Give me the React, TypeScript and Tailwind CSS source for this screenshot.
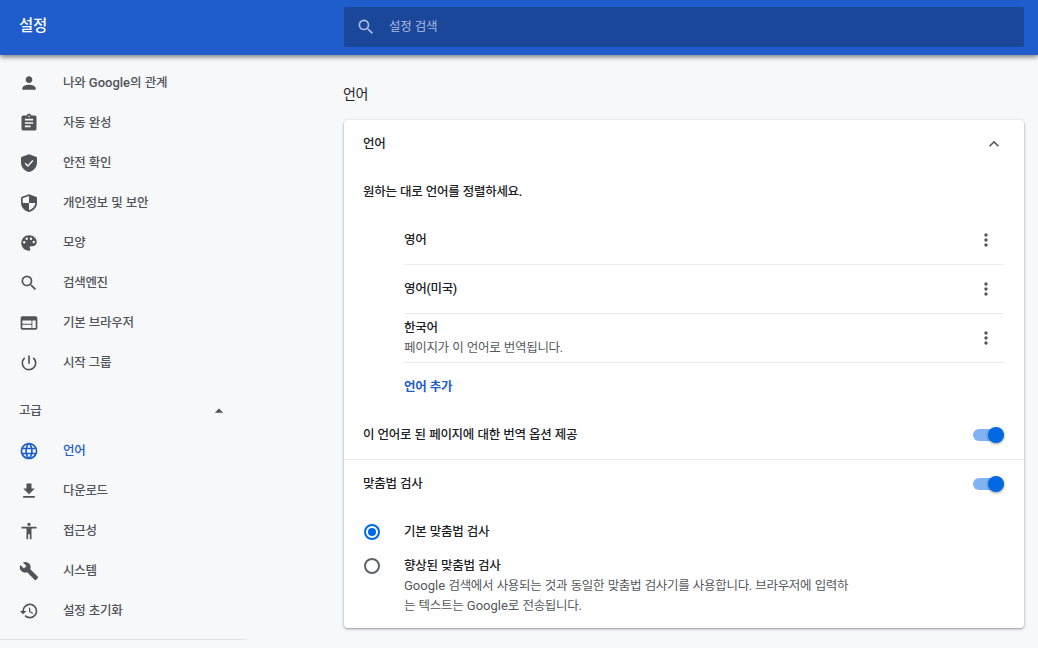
import type { ReactNode } from "react";
import {
  MdPerson, MdAssignment, MdSearch, MdWeb, MdPowerSettingsNew, MdArrowDropUp,
  MdLanguage, MdBuild, MdRestore, MdExpandLess, MdMoreVert,
} from "react-icons/md";

type IconProps = { className?: string };

function DownloadIcon({ className }: IconProps) {
  return (
    <svg viewBox="0 0 24 24" fill="currentColor" className={className}>
      <path d="M19 9h-4V3H9v6H5l7 7 7-7zM5 18v2h14v-2H5z" />
    </svg>
  );
}

function AccessibilityIcon({ className }: IconProps) {
  return (
    <svg viewBox="0 0 24 24" fill="currentColor" className={className}>
      <path d="M12 2c1.1 0 2 .9 2 2s-.9 2-2 2-2-.9-2-2 .9-2 2-2zm9 7h-6v13h-2v-6h-2v6H9V9H3V7h18v2z" />
    </svg>
  );
}

function SafetyIcon({ className }: IconProps) {
  return (
    <svg viewBox="0 0 20 20" className={className}>
      <path fill="currentColor" d="M10 1.2l7 2.5q1 .4 1 1.4v4.4c0 4.6-3.2 8.3-8 9.5-4.8-1.2-8-4.9-8-9.5V5.100q0-1 1-1.400z" />
      <path d="M6.100 10.300L8.900 13l5-5.600" fill="none" stroke="#f7f8fa" strokeWidth="1.500" />
    </svg>
  );
}

function SecurityIcon({ className }: IconProps) {
  return (
    <svg viewBox="0 0 20 20" className={className}>
      <path fill="currentColor" d="M10 1.2l7 2.5q1 .4 1 1.4v4.4c0 4.6-3.2 8.3-8 9.5-4.8-1.2-8-4.9-8-9.5V5.100q0-1 1-1.400z" />
      <path fill="#f7f8fa" d="M10 3v7H3.700V5.300zM10 10h6.300c-.4 3.400-2.700 6.100-6.300 7.200z" />
    </svg>
  );
}

function PaletteIcon({ className }: IconProps) {
  return (
    <svg viewBox="0 0 20 20" className={className}>
      <path fill="currentColor" d="M10 2.300C5.700 2.300 2.300 5.700 2.300 10s3.400 7.700 7.700 7.700c.8 0 1.300-.6 1.300-1.300 0-.4-.1-.7-.3-.9-.2-.3-.3-.6-.3-.9 0-.7.6-1.300 1.300-1.300h1.500c2.400 0 4.200-1.900 4.200-4.300 0-3.800-3.400-6.700-7.700-6.700z" />
      <g fill="#f7f8fa">
        <circle cx="5.200" cy="9.200" r="1.200" />
        <circle cx="7.700" cy="5.700" r="1.200" />
        <circle cx="12" cy="5.700" r="1.200" />
        <circle cx="14.700" cy="9" r="1.200" />
      </g>
    </svg>
  );
}

const Latin = ({ children }: { children: ReactNode }) => <span className="text-[13px] tracking-normal">{children}</span>;

type Item = { icon: (p: IconProps) => ReactNode; label: ReactNode; active?: boolean };

const mainItems: Item[] = [
  { icon: MdPerson, label: <>나와 <Latin>Google</Latin>의 관계</> },
  { icon: MdAssignment, label: "자동 완성" },
  { icon: SafetyIcon, label: "안전 확인" },
  { icon: SecurityIcon, label: "개인정보 및 보안" },
  { icon: PaletteIcon, label: "모양" },
  { icon: MdSearch, label: "검색엔진" },
  { icon: MdWeb, label: "기본 브라우저" },
  { icon: MdPowerSettingsNew, label: "시작 그룹" },
];

const advancedItems: Item[] = [
  { icon: MdLanguage, label: "언어", active: true },
  { icon: DownloadIcon, label: "다운로드" },
  { icon: AccessibilityIcon, label: "접근성" },
  { icon: MdBuild, label: "시스템" },
  { icon: MdRestore, label: "설정 초기화" },
];

function NavItem({ icon: Icon, label, active }: Item) {
  return (
    <a className={`flex h-10 items-center gap-6 pl-[19px] font-medium ${active ? "text-[#1f5dcd]" : "text-[#505357]"}`}>
      <Icon className="size-5 shrink-0" />
      <span className="whitespace-nowrap">{label}</span>
    </a>
  );
}

function LanguageRow({ name, note }: { name: string; note?: string }) {
  return (
    <div className="flex h-[49px] items-center justify-between border-b border-[#e8eaed] pr-2">
      <div className="leading-5">
        <div>{name}</div>
        {note && <div className="font-normal text-[#54585c]">{note}</div>}
      </div>
      <MdMoreVert className="size-5 text-[#54575b]" />
    </div>
  );
}

function Toggle() {
  return (
    <div className="flex h-3 w-[31px] items-center justify-end rounded-full bg-[#7fb3f1]">
      <div className="size-4 shrink-0 rounded-full bg-[#0169e3] shadow-[0_1px_3px_rgba(0,0,0,0.4)]" />
    </div>
  );
}

function Radio({ checked }: { checked?: boolean }) {
  return (
    <div className={`flex size-4 shrink-0 items-center justify-center rounded-full border-2 ${checked ? "border-[#0169e3]" : "border-[#5f6368]"}`}>
      {checked && <div className="size-2 rounded-full bg-[#0169e3]" />}
    </div>
  );
}

export default function App() {
  return (
    <div className="flex h-[648px] w-[1038px] flex-col overflow-hidden bg-[#f7f8fa] font-[Roboto,'Noto_Sans_CJK_KR',sans-serif] text-[12.5px] leading-5 tracking-[-0.3px] [word-spacing:0.6px] text-[#202124]">
      <header className="z-10 flex h-[55px] shrink-0 items-center bg-[#1f5dcd] shadow-[0_2px_5px_rgba(0,0,0,0.5)]">
        <h1 className="w-[344px] pb-1 pl-[19px] text-[15.5px] font-medium text-white">설정</h1>
        <div className="mb-px flex h-10 w-[680px] items-center gap-[14px] rounded-xs bg-[#1b479b] pl-3 text-[#a9bbdf]">
          <MdSearch className="size-5" />
          <span className="-ml-px">설정 검색</span>
        </div>
      </header>
      <div className="flex min-h-0 flex-1">
        <nav className="w-[245px] pt-2">
          {mainItems.map((item, i) => <NavItem key={i} {...item} />)}
          <div className="mt-2 flex h-10 items-center justify-between pr-4 pl-[19px] font-medium text-[#505357]">
            <span>고급</span>
            <MdArrowDropUp className="size-5" />
          </div>
          {advancedItems.map((item, i) => <NavItem key={i} {...item} />)}
          <div className="mt-2 border-t border-[#e0e2e5]" />
        </nav>
        <main className="ml-[99px] w-[680px]">
          <h2 className="-ml-px flex h-[65px] items-center pt-3 text-[14px]">언어</h2>
          <section className="h-[508px] rounded bg-white font-medium shadow-[0_1px_2px_rgba(60,64,67,0.4),0_1px_3px_1px_rgba(60,64,67,0.12)]">
            <div className="flex h-12 items-center justify-between pr-5 pl-[19px]">
              <span>언어</span>
              <MdExpandLess className="size-5 text-[#54575b]" />
            </div>
            <div className="flex h-12 items-center pl-[19px]">원하는 대로 언어를 정렬하세요.</div>
            <div className="mr-5 ml-[60px]">
              <LanguageRow name="영어" />
              <LanguageRow name="영어(미국)" />
              <LanguageRow name="한국어" note="페이지가 이 언어로 번역됩니다." />
              <div className="flex h-12 items-center font-semibold text-[#1f5dcd]">언어 추가</div>
            </div>
            <div className="flex h-[49px] items-center justify-between border-b border-[#e8eaed] pr-5 pl-[19px]">
              <span>이 언어로 된 페이지에 대한 번역 옵션 제공</span>
              <Toggle />
            </div>
            <div className="flex h-12 items-center justify-between pr-5 pl-[19px]">
              <span>맞춤법 검사</span>
              <Toggle />
            </div>
            <div className="flex h-12 items-center gap-6 px-5">
              <Radio checked />
              <span>기본 맞춤법 검사</span>
            </div>
            <div className="flex gap-6 px-5">
              <div className="pt-0.5"><Radio /></div>
              <div className="leading-5 whitespace-nowrap">
                <div>향상된 맞춤법 검사</div>
                <div className="font-normal text-[#54585c]">
                  <Latin>Google</Latin> 검색에서 사용되는 것과 동일한 맞춤법 검사기를 사용합니다. 브라우저에 입력하<br />
                  는 텍스트는 <Latin>Google</Latin>로 전송됩니다.
                </div>
              </div>
            </div>
          </section>
        </main>
      </div>
    </div>
  );
}
